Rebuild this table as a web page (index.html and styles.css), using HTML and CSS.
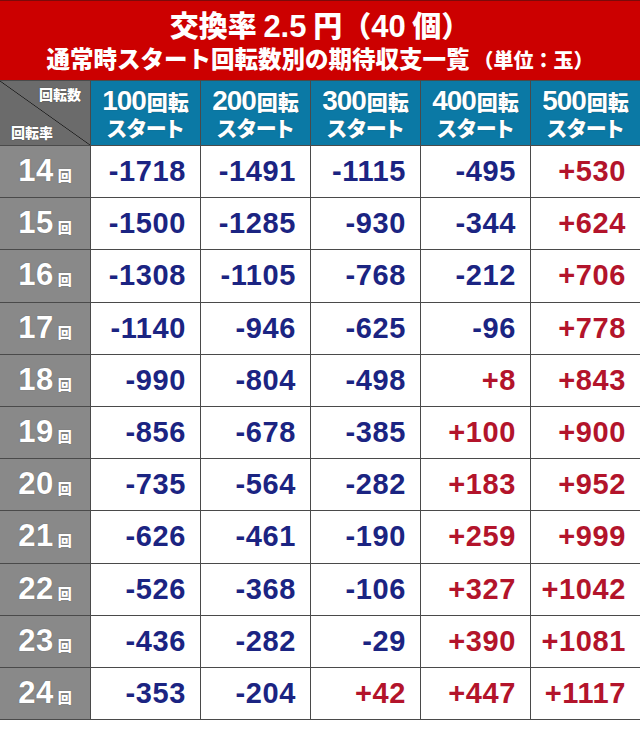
FILE: index.html
```html
<!DOCTYPE html>
<html lang="ja">
<head>
<meta charset="utf-8">
<title>交換率 2.5 円（40 個）</title>
<link rel="stylesheet" href="styles.css">
</head>
<body>
<div class="page">
  <header class="title">
    <div class="title-main">交換率 <span class="num">2.5</span> 円（<span class="num">40</span> 個）</div>
    <div class="title-sub">通常時スタート回転数別の期待収支一覧<span class="unit">（単位：玉）</span></div>
  </header>
  <div class="grid">
    <div class="corner"><span class="c-top">回転数</span><span class="c-bottom">回転率</span></div>
    <div class="colh"><div class="l1"><span class="num">100</span>回転</div><div class="l2">スタート</div></div>
    <div class="colh"><div class="l1"><span class="num">200</span>回転</div><div class="l2">スタート</div></div>
    <div class="colh"><div class="l1"><span class="num">300</span>回転</div><div class="l2">スタート</div></div>
    <div class="colh"><div class="l1"><span class="num">400</span>回転</div><div class="l2">スタート</div></div>
    <div class="colh"><div class="l1"><span class="num">500</span>回転</div><div class="l2">スタート</div></div>

    <div class="rowh"><span class="rn">14</span><span class="kai">回</span></div>
    <div class="v neg">-1718</div><div class="v neg">-1491</div><div class="v neg">-1115</div><div class="v neg">-495</div><div class="v pos">+530</div>

    <div class="rowh"><span class="rn">15</span><span class="kai">回</span></div>
    <div class="v neg">-1500</div><div class="v neg">-1285</div><div class="v neg">-930</div><div class="v neg">-344</div><div class="v pos">+624</div>

    <div class="rowh"><span class="rn">16</span><span class="kai">回</span></div>
    <div class="v neg">-1308</div><div class="v neg">-1105</div><div class="v neg">-768</div><div class="v neg">-212</div><div class="v pos">+706</div>

    <div class="rowh"><span class="rn">17</span><span class="kai">回</span></div>
    <div class="v neg">-1140</div><div class="v neg">-946</div><div class="v neg">-625</div><div class="v neg">-96</div><div class="v pos">+778</div>

    <div class="rowh"><span class="rn">18</span><span class="kai">回</span></div>
    <div class="v neg">-990</div><div class="v neg">-804</div><div class="v neg">-498</div><div class="v pos">+8</div><div class="v pos">+843</div>

    <div class="rowh"><span class="rn">19</span><span class="kai">回</span></div>
    <div class="v neg">-856</div><div class="v neg">-678</div><div class="v neg">-385</div><div class="v pos">+100</div><div class="v pos">+900</div>

    <div class="rowh"><span class="rn">20</span><span class="kai">回</span></div>
    <div class="v neg">-735</div><div class="v neg">-564</div><div class="v neg">-282</div><div class="v pos">+183</div><div class="v pos">+952</div>

    <div class="rowh"><span class="rn">21</span><span class="kai">回</span></div>
    <div class="v neg">-626</div><div class="v neg">-461</div><div class="v neg">-190</div><div class="v pos">+259</div><div class="v pos">+999</div>

    <div class="rowh"><span class="rn">22</span><span class="kai">回</span></div>
    <div class="v neg">-526</div><div class="v neg">-368</div><div class="v neg">-106</div><div class="v pos">+327</div><div class="v pos">+1042</div>

    <div class="rowh"><span class="rn">23</span><span class="kai">回</span></div>
    <div class="v neg">-436</div><div class="v neg">-282</div><div class="v neg">-29</div><div class="v pos">+390</div><div class="v pos">+1081</div>

    <div class="rowh"><span class="rn">24</span><span class="kai">回</span></div>
    <div class="v neg">-353</div><div class="v neg">-204</div><div class="v pos">+42</div><div class="v pos">+447</div><div class="v pos">+1117</div>
  </div>
</div>
</body>
</html>
```
FILE: styles.css
```css
html, body {
  margin: 0;
  padding: 0;
  background: #ffffff;
}

body {
  font-family: "Noto Sans CJK JP", "Liberation Sans", sans-serif;
}

.page {
  width: 640px;
}

.title {
  height: 79px;
  background: #cc0000;
  border-top: 1px solid #7a0a0a;
  color: #ffffff;
  font-weight: 900;
  display: flex;
  flex-direction: column;
  align-items: center;
  justify-content: flex-start;
}

.title-main {
  font-size: 29px;
  line-height: 32px;
  margin-top: 7px;
  white-space: nowrap;
}

.title-main .num {
  font-family: "Liberation Sans", sans-serif;
  font-weight: 700;
  font-size: 31px;
}

.title-sub {
  font-size: 23.5px;
  line-height: 28px;
  margin-top: 1px;
  white-space: nowrap;
}

.title-sub .unit {
  font-size: 20px;
  margin-left: 4px;
}

.grid {
  display: grid;
  grid-template-columns: 90px repeat(5, 109px);
  grid-template-rows: 64px repeat(11, 51.2px);
  gap: 1px;
  padding: 1px 0;
  background: #4a4a4a;
}

.corner {
  background: linear-gradient(to top right, #6b6b6b calc(50% - 0.7px), #1e1e1e 50%, #6b6b6b calc(50% + 0.7px));
  display: flex;
  flex-direction: column;
  justify-content: space-between;
  color: #ffffff;
  font-size: 14px;
  font-weight: 900;
  line-height: 16px;
  padding: 5px 9px 5px 11px;
  text-shadow: 0 0 1px #333;
}

.corner .c-top {
  align-self: flex-end;
}

.corner .c-bottom {
  align-self: flex-start;
}

.colh {
  background: #0b79a5;
  color: #ffffff;
  font-weight: 900;
  display: flex;
  flex-direction: column;
  align-items: center;
  justify-content: center;
  text-shadow: 0 0 1px #1d4a5c;
  font-feature-settings: "palt";
}

.colh .l1 {
  font-size: 21px;
  line-height: 27px;
  white-space: nowrap;
}

.colh .l1 .num {
  font-family: "Liberation Sans", sans-serif;
  font-weight: 700;
  font-size: 28px;
  line-height: 27px;
  letter-spacing: -1px;
  margin-right: 1px;
}

.colh .l2 {
  font-size: 21px;
  line-height: 24px;
}

.rowh {
  background: #898989;
  color: #ffffff;
  display: flex;
  align-items: baseline;
  justify-content: center;
  padding-top: 9px;
  box-sizing: border-box;
  text-shadow: 0 0 1px #555;
}

.rowh .rn {
  font-family: "Liberation Sans", sans-serif;
  font-weight: 700;
  font-size: 31px;
  line-height: 32px;
  letter-spacing: 0.5px;
}

.rowh .kai {
  font-size: 14px;
  font-weight: 900;
  margin-left: 4px;
}

.v {
  background: #ffffff;
  font-family: "Liberation Sans", sans-serif;
  font-weight: 700;
  font-size: 29px;
  letter-spacing: 0.6px;
  display: flex;
  align-items: center;
  justify-content: flex-end;
  padding-right: 14px;
}

.neg {
  color: #1b2482;
}

.pos {
  color: #b3142b;
}
```
